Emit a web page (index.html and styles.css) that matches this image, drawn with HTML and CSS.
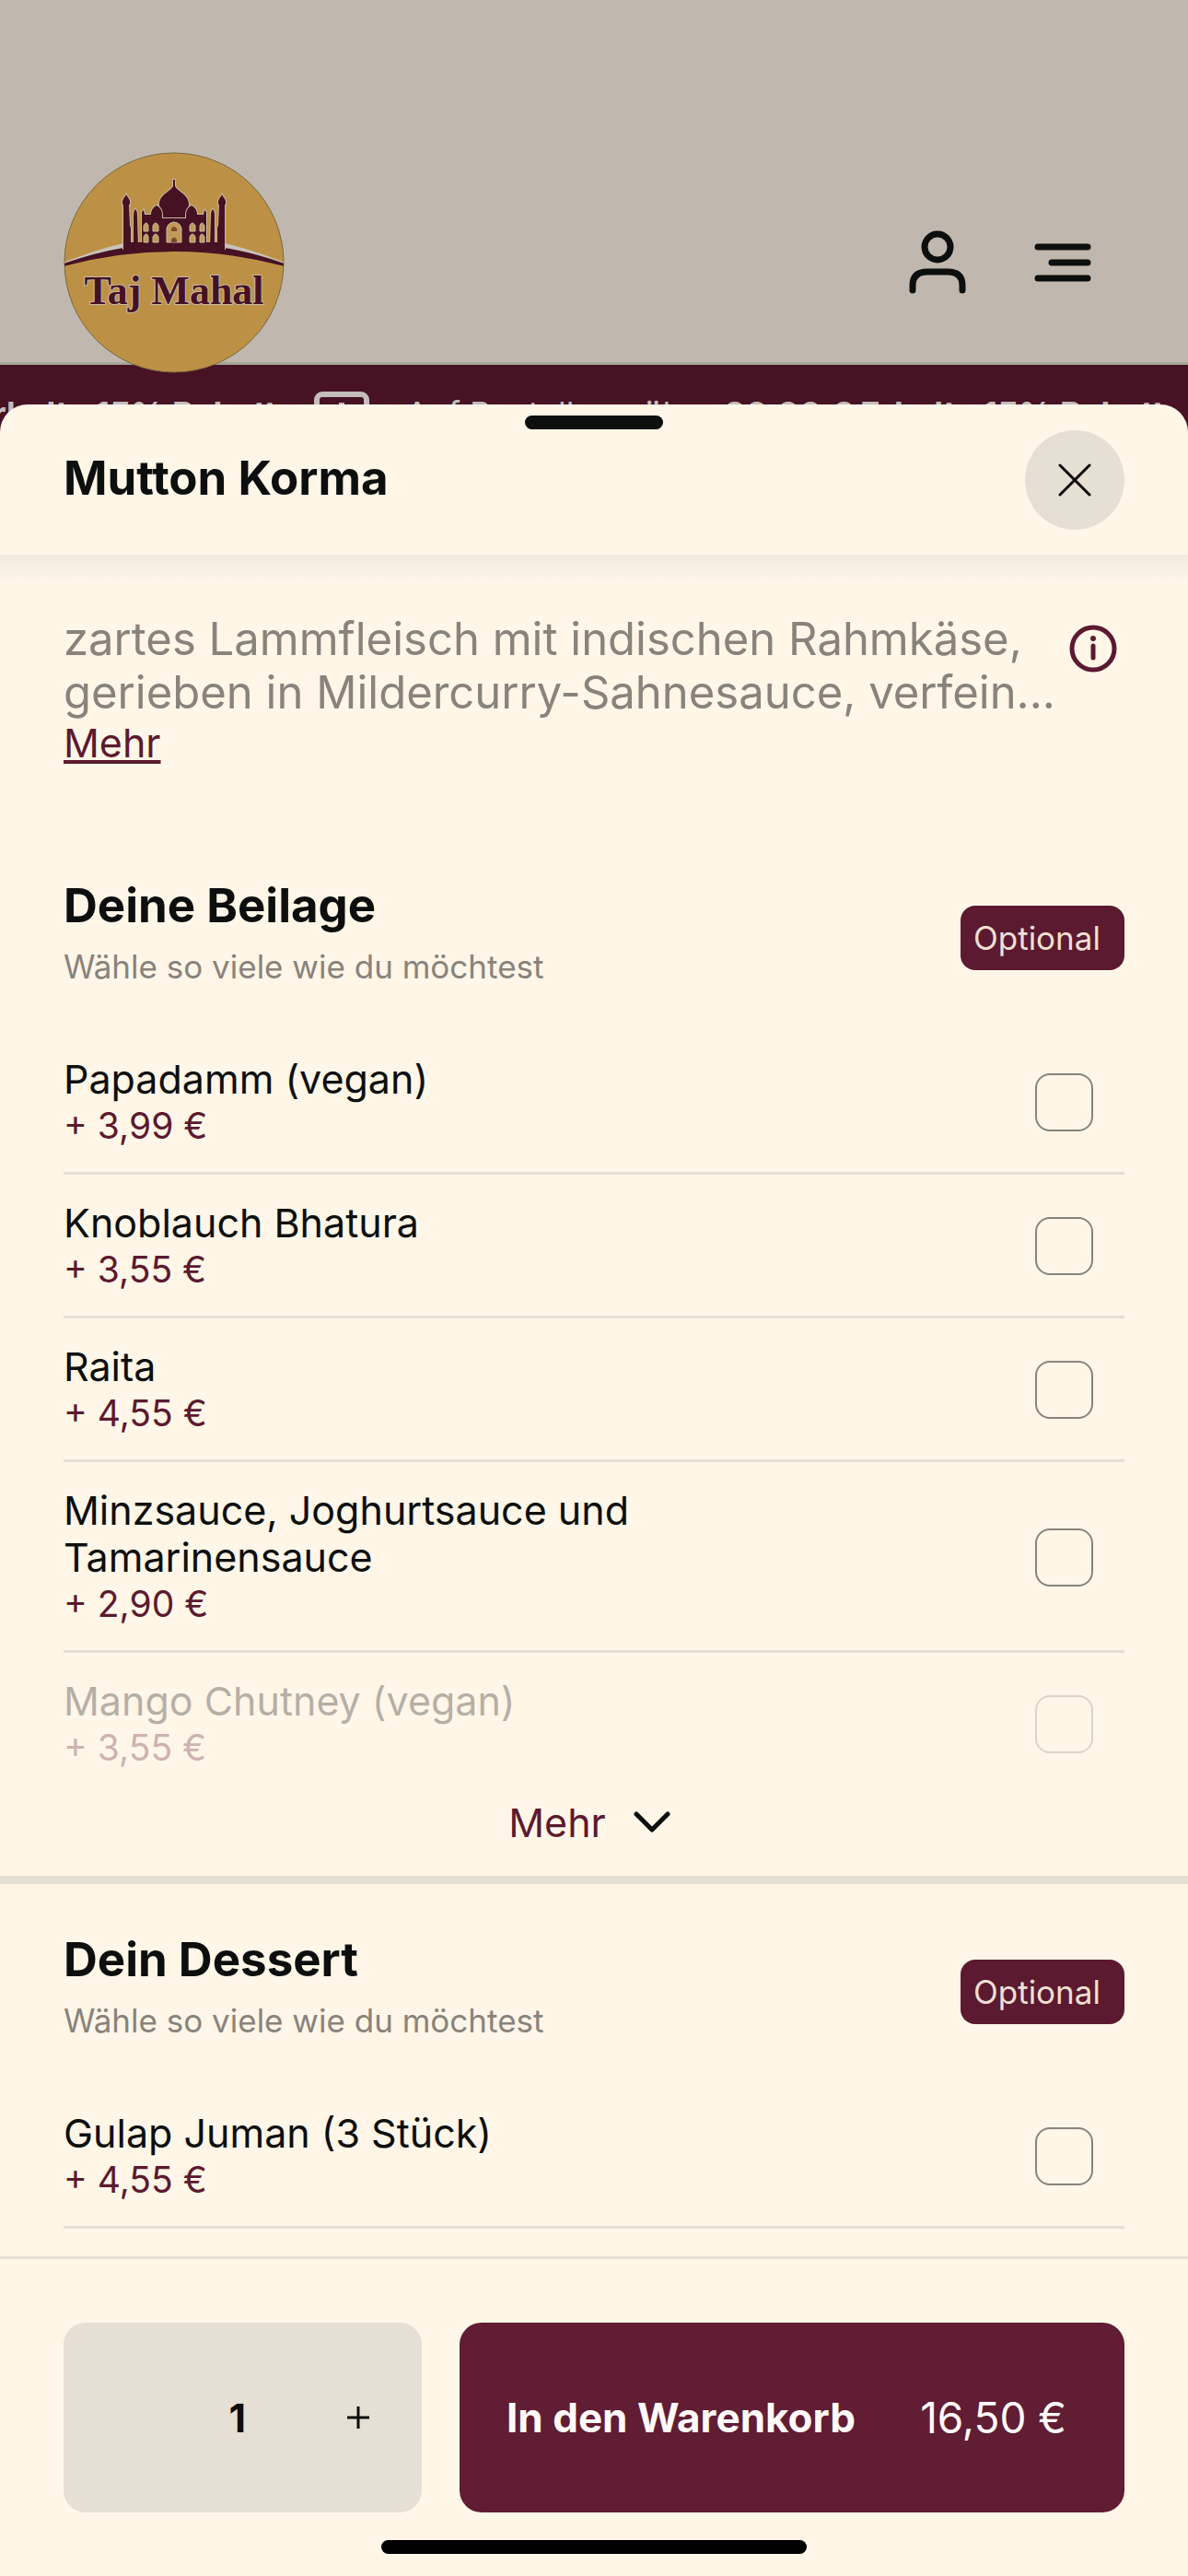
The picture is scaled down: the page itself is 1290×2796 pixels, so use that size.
FILE: index.html
```html
<!DOCTYPE html>
<html lang="de">
<head>
    <meta charset="UTF-8">
    <meta name="viewport" content="width=device-width, initial-scale=1.0">
    <title>Taj Mahal - Mutton Korma</title>
    <link rel="stylesheet" href="styles.css">
</head>
<body>
    <header class="site-header">
        <a href="#" class="logo" aria-label="Taj Mahal">
            <svg viewBox="0 0 240 240" width="240" height="240">
                <defs>
                    <clipPath id="disc"><circle cx="120" cy="120" r="119"/></clipPath>
                </defs>
                <circle cx="120" cy="120" r="119" fill="#bd9145" stroke="#77683f" stroke-width="1"/>
                <g clip-path="url(#disc)">
                    <path d="M0 120 Q35 106 65 99 V106 Q35 110 0 122Z M240 120 Q205 106 175 99 V106 Q205 110 240 122Z" fill="#c8c2bb"/>
                    <path d="M0 121 Q35 109 65 104 L175 104 Q205 109 240 121 L240 124 Q180 108 120 108 Q60 108 0 124Z" fill="#461223"/>
                </g>
                <g fill="#461223" stroke="#c8b9a8" stroke-width="2" paint-order="stroke">
                    <path d="M119 30 L121 30 L121 37 C125 44 136 46 136 57 Q136 64 132 68 L132 73 L108 73 L108 68 Q104 64 104 57 C104 46 115 44 119 37Z"/>
                    <path d="M65 105 L65 57 L64 57 L64 53 Q65 50 67 48 L68 46 L69 48 Q71 50 72 53 L72 57 L71 57 L72 80 L73 82 L73 105Z"/>
                    <path d="M175 105 L175 57 L176 57 L176 53 Q175 50 173 48 L172 46 L171 48 Q169 50 168 53 L168 57 L169 57 L168 80 L167 82 L167 105Z"/>
                    <path d="M76 102 L76 67 Q76 64 78 62 Q80 64 80 67 L81 102Z"/>
                    <path d="M164 102 L164 67 Q164 64 162 62 Q160 64 160 67 L159 102Z"/>
                    <path d="M85 102 L85 65 L87 63 L88 68 L95 68 Q95 61 101 58 Q107 61 107 68 L107 72 L133 72 L133 68 Q133 61 139 58 Q145 61 145 68 L152 68 L153 63 L155 65 L155 102Z"/>
                </g>
                <path d="M65 98 L175 98 L175 107 L65 107Z" fill="#461223"/>
                <g fill="#c09a58" stroke="#c8b9a8" stroke-width="1">
                    <path d="M112 98 L112 83 Q113 77 120 76 Q127 77 128 83 L128 98Z"/>
                    <path d="M87 86 V80 Q90 74 92 80 V86Z M97 86 V80 Q100 74 103 80 V86Z M137 86 V80 Q140 74 143 80 V86Z M148 86 V80 Q150 74 153 80 V86Z"/>
                    <path d="M87 98 V92 Q90 86 92 92 V98Z M97 98 V92 Q100 86 103 92 V98Z M137 98 V92 Q140 86 143 92 V98Z M148 98 V92 Q150 86 153 92 V98Z"/>
                </g>
                <path d="M117 86 V83 Q120 79 123 83 V86Z M117 98 V95 Q120 90 123 95 V98Z" fill="#7a4a33"/>
                <text x="120" y="165" class="logo-text">Taj Mahal</text>
            </svg>
        </a>
        <nav class="site-nav">
            <button type="button" class="icon-btn" aria-label="Konto">
                <svg viewBox="0 0 72 72" width="72" height="72" fill="none" stroke="#0d0f0e" stroke-width="7" stroke-linecap="round">
                    <circle cx="36" cy="19" r="14"/>
                    <path d="M9 66 v-5 q0 -15 16 -15 h22 q16 0 16 15 v5"/>
                </svg>
            </button>
            <button type="button" class="icon-btn" aria-label="Menü">
                <svg viewBox="0 0 72 72" width="72" height="72" fill="none" stroke="#0d0f0e" stroke-width="7" stroke-linecap="round">
                    <path d="M9 19 H63 M24 36 H63 M9 53 H63"/>
                </svg>
            </button>
        </nav>
    </header>

    <div class="banner">
        <b>Erhalte 15% Rabatt</b>
        <svg viewBox="0 0 60 56" width="60" height="56" fill="none" stroke="#c4bdbb" stroke-width="6">
            <rect x="3" y="3" width="54" height="50" rx="6"/>
            <path d="M30 12 V44 M18 28 H42"/>
        </svg>
        <span>Auf Bestellung über <b>30,00 € Erhalte 15% Rabatt</b></span>
    </div>

    <main class="sheet">
        <div class="sheet-header">
            <span class="handle"></span>
            <h1>Mutton Korma</h1>
            <button type="button" class="close-btn" aria-label="Schließen">
                <svg viewBox="0 0 36 36" width="36" height="36" stroke="#0d0f0e" stroke-width="3" stroke-linecap="round">
                    <path d="M2 2 L34 34 M34 2 L2 34"/>
                </svg>
            </button>
        </div>

        <div class="sheet-body">
            <section class="description">
                <div>
                    <p>zartes Lammfleisch mit indischen Rahmkäse,<br>gerieben in Mildercurry-Sahnesauce, verfein...</p>
                    <a href="#">Mehr</a>
                </div>
                <button type="button" class="info-btn" aria-label="Allergene">
                    <svg viewBox="0 0 52 52" width="52" height="52" fill="none" stroke="#5b1a2f" stroke-width="5" stroke-linecap="round">
                        <circle cx="26" cy="26" r="23"/>
                        <path d="M26 23 V36"/>
                        <circle cx="26" cy="15" r="3" fill="#5b1a2f" stroke="none"/>
                    </svg>
                </button>
            </section>

            <section class="group">
                <div class="group-header">
                    <div>
                        <h2>Deine Beilage</h2>
                        <p>Wähle so viele wie du möchtest</p>
                    </div>
                    <span class="badge">Optional</span>
                </div>
                <ul class="options">
                    <li>
                        <label for="papadamm">Papadamm (vegan)<small>+ 3,99 €</small></label>
                        <input type="checkbox" id="papadamm">
                    </li>
                    <li>
                        <label for="bhatura">Knoblauch Bhatura<small>+ 3,55 €</small></label>
                        <input type="checkbox" id="bhatura">
                    </li>
                    <li>
                        <label for="raita">Raita<small>+ 4,55 €</small></label>
                        <input type="checkbox" id="raita">
                    </li>
                    <li>
                        <label for="saucen">Minzsauce, Joghurtsauce und Tamarinensauce<small>+ 2,90 €</small></label>
                        <input type="checkbox" id="saucen">
                    </li>
                    <li class="faded">
                        <label for="chutney">Mango Chutney (vegan)<small>+ 3,55 €</small></label>
                        <input type="checkbox" id="chutney">
                    </li>
                </ul>
                <button type="button" class="more-btn">Mehr
                    <svg viewBox="0 0 40 24" width="40" height="24" fill="none" stroke="#0d0f0e" stroke-width="5" stroke-linecap="round" stroke-linejoin="round">
                        <path d="M3 3 L20 20 L37 3"/>
                    </svg>
                </button>
            </section>

            <section class="group">
                <div class="group-header">
                    <div>
                        <h2>Dein Dessert</h2>
                        <p>Wähle so viele wie du möchtest</p>
                    </div>
                    <span class="badge">Optional</span>
                </div>
                <ul class="options">
                    <li>
                        <label for="gulap">Gulap Juman (3 Stück)<small>+ 4,55 €</small></label>
                        <input type="checkbox" id="gulap">
                    </li>
                </ul>
            </section>
        </div>

        <footer class="sheet-footer">
            <div class="stepper">
                <span class="amount">1</span>
                <button type="button" class="plus-btn" aria-label="Mehr">
                    <svg viewBox="0 0 24 24" width="24" height="24" stroke="#0d0f0e" stroke-width="3">
                        <path d="M0 12 H24 M12 0 V24"/>
                    </svg>
                </button>
            </div>
            <button type="button" class="cart-btn"><b>In den Warenkorb</b><span>16,50 €</span></button>
            <span class="home-indicator"></span>
        </footer>
    </main>
</body>
</html>
```

FILE: styles.css
```css
* {
    box-sizing: border-box;
}
body {
    margin: 0;
    min-height: 100vh;
    display: flex;
    flex-direction: column;
    font-family: Inter, "Liberation Sans", sans-serif;
    font-size: 43px;
    color: #0d0f0e;
    background-color: #471223;
}
h1, h2, p, ul {
    margin: 0;
    padding: 0;
}
button {
    padding: 0;
    border: none;
    background: none;
    font: inherit;
    color: inherit;
    cursor: pointer;
}
svg {
    display: block;
    flex: none;
}

/* page behind the sheet */
.site-header {
    display: flex;
    justify-content: space-between;
    align-items: flex-end;
    height: 396px;
    padding: 0 100px 0 69px;
    background-color: #c0b8ae;
    border-bottom: 3px solid #a7a699;
}
.logo {
    height: 228px;
}
.logo svg {
    position: relative;
}
.logo-text {
    font-family: "Liberation Serif", serif;
    font-size: 44px;
    font-weight: bold;
    text-anchor: middle;
    fill: #461223;
    stroke: #c8b9a8;
    stroke-width: 2px;
    paint-order: stroke;
}
.site-nav {
    display: flex;
    gap: 64px;
    padding-bottom: 72px;
}
/* the ticker runs on underneath the sheet */
.banner {
    display: flex;
    align-items: flex-start;
    gap: 40px;
    height: 114px;
    margin-bottom: -71px;
    padding-top: 29px;
    overflow: hidden;
    font-size: 36px;
    line-height: 48px;
    color: #c4bdbb;
    white-space: nowrap;
}
.banner > b {
    margin-left: -30px;
}

.sheet {
    position: relative;
    flex: 1;
    display: flex;
    flex-direction: column;
    background-color: #fff6e8;
    border-radius: 30px 30px 0 0;
}
.sheet-header {
    position: relative;
    display: flex;
    justify-content: space-between;
    align-items: center;
    height: 163px;
    padding: 0 69px;
    border-radius: 30px 30px 0 0;
}
.sheet-header::after {
    content: "";
    position: absolute;
    top: 100%;
    left: 0;
    right: 0;
    height: 30px;
    background-image: linear-gradient(#f2eadd, #fff6e8);
}
.handle {
    position: absolute;
    top: 12px;
    left: 50%;
    width: 150px;
    height: 15px;
    margin-left: -75px;
    border-radius: 8px;
    background-color: #0d0f0e;
}
h1, h2 {
    font-size: 51px;
    line-height: 60px;
    font-weight: 700;
}
h1 {
    padding-bottom: 4px;
}
.close-btn {
    display: flex;
    justify-content: center;
    align-items: center;
    width: 108px;
    height: 108px;
    border-radius: 50%;
    background-color: #e6dfd3;
}

.sheet-body {
    flex: 1;
}
.description {
    display: flex;
    justify-content: space-between;
    align-items: flex-start;
    height: 327px;
    padding: 63px 69px 0;
}
.description p {
    font-size: 49px;
    line-height: 58px;
    color: #88837b;
    white-space: nowrap;
}
.description a {
    display: block;
    line-height: 50px;
    color: #5b1a2f;
}
.info-btn {
    margin: 13px 8px 0 0;
}

.group-header {
    display: flex;
    justify-content: space-between;
    align-items: center;
    padding: 24px 69px 46px;
}
.group-header p {
    margin-top: 12px;
    font-size: 35px;
    line-height: 48px;
    color: #88837b;
}
.badge {
    margin-top: 10px;
    width: 178px;
    padding-left: 14px;
    border-radius: 16px;
    font-size: 35px;
    line-height: 70px;
    color: #f0dfd3;
    background-color: #5b1a2f;
}
.options {
    list-style: none;
    margin: 0 69px;
}
.options li {
    display: flex;
    justify-content: space-between;
    align-items: center;
    padding: 27px 34px 25px 0;
    border-bottom: 3px solid #e6dfd3;
}
.options label {
    width: 660px;
    line-height: 51px;
}
.options small {
    display: block;
    font-size: 39px;
    line-height: 50px;
    color: #5b1a2f;
}
.options input {
    appearance: none;
    width: 63px;
    height: 63px;
    margin: 0;
    border: 2px solid #88837b;
    border-radius: 16px;
}
.options .faded {
    border-bottom: none;
    opacity: 0.3;
}
.more-btn {
    display: flex;
    justify-content: center;
    align-items: center;
    gap: 30px;
    width: 100%;
    height: 62px;
    margin-bottom: 27px;
    padding-right: 10px;
    color: #5b1a2f;
}
.group + .group {
    padding-top: 28px;
    border-top: 9px solid #e6dfd3;
}

.sheet-footer {
    display: flex;
    flex-wrap: wrap;
    justify-content: center;
    gap: 30px 41px;
    padding: 69px 69px 24px;
    border-top: 3px solid #e6dfd3;
}
.stepper {
    display: flex;
    justify-content: flex-end;
    align-items: center;
    width: 389px;
    height: 206px;
    padding-right: 57px;
    gap: 110px;
    border-radius: 24px;
    font-weight: 700;
    background-color: #e6dfd3;
}
.cart-btn {
    flex: 1;
    display: flex;
    justify-content: space-between;
    align-items: center;
    padding: 0 63px 0 51px;
    border-radius: 24px;
    font-size: 44px;
    color: #fff9f9;
    background-color: #601d33;
}
.cart-btn span {
    font-size: 46px;
}
.home-indicator {
    width: 462px;
    height: 15px;
    border-radius: 8px;
    background-color: #000;
}
```
